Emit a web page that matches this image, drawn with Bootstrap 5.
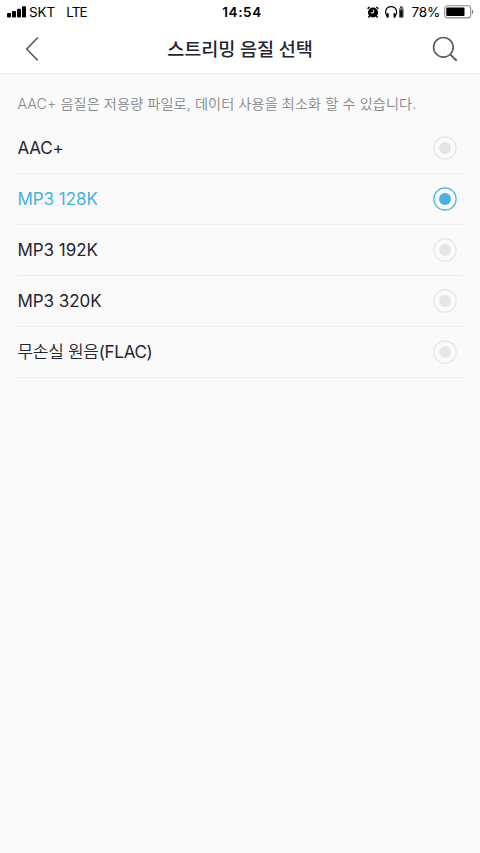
<!DOCTYPE html>
<html lang="ko">
<head>
<meta charset="utf-8">
<meta name="viewport" content="width=device-width, initial-scale=1">
<title>스트리밍 음질 선택</title>
<link rel="stylesheet" href="https://cdn.jsdelivr.net/npm/bootstrap@5.3.0/dist/css/bootstrap.min.css">
<style>
body{background:#fafafa;color:#25252f;font-family:Inter,"Noto Sans CJK KR",sans-serif;min-height:100vh}
svg{display:block;flex:none}
.top-area{background:#fff;height:74px;border-bottom:1px solid #ebebeb}
.status-bar{height:24px;color:#000;font-size:13.5px;line-height:24px;padding:0 6px 0 7px}
.status-side{flex:1 1 0}
.clock{font-size:13.5px;font-weight:600;letter-spacing:.6px;padding-left:3px}
.carrier{margin-left:3px;letter-spacing:-.1px}
.network{margin-left:11px;letter-spacing:-.8px}
.percent{margin:0 4px 0 7px;letter-spacing:-.2px}
.title-bar{height:49px;padding:0 22px 0 24px}
.page-title{font-size:18.6px;font-weight:500;letter-spacing:-.15px;line-height:49px;padding:1px 2px 0 0}
.icon-btn{line-height:0}
.hint{height:49px;padding:15px 0 0 17.5px;font-size:14.2px;line-height:30px;color:#85898b;letter-spacing:.08px;font-weight:350;white-space:nowrap}
.quality-list{margin:0 17px 0 17px}
.quality-list .quality-item{height:51px;padding:0 6px 0 .5px;border:0;border-bottom:1px solid #efefef;border-radius:0;background:transparent;color:#25252f;font-size:17px;letter-spacing:-.05px;line-height:50px}
.quality-list .selected{color:#4bb0df}
.quality-list .quality-item:first-child{letter-spacing:-.2px}
.quality-list .quality-item:last-child{letter-spacing:-.3px}
.lossless{font-weight:350}
.lossless .codec{font-weight:400}
.dot{width:24px;height:24px;color:#e5e5e5}
.selected .dot{color:#4bb0df}
</style>
</head>
<body>
<header class="top-area">
  <div class="status-bar d-flex align-items-center">
    <div class="status-side d-flex align-items-center">
      <svg width="19" height="12" viewBox="0 0 19 12"><rect x="0" y="7" width="4" height="4.5" rx="1"/><rect x="5" y="5" width="4" height="6.5" rx="1"/><rect x="10" y="2.8" width="4" height="8.7" rx="1"/><rect x="15" y="0.3" width="4" height="11.2" rx="1"/></svg>
      <span class="carrier">SKT</span><span class="network">LTE</span>
    </div>
    <span class="clock">14:54</span>
    <div class="status-side d-flex align-items-center justify-content-end">
      <svg width="12" height="13" viewBox="0 0 12 13"><circle cx="6" cy="6.5" r="5"/><path d="M.6 2.8 2.6 1M11.4 2.8 9.4 1M2.5 10l-1 1.5M9.5 10l1 1.5" stroke="#000" stroke-width="1.5"/><path d="M6.3 3.6v3.3H3.5" fill="none" stroke="#fff" stroke-width="1"/></svg>
      <svg class="ms-1" width="22" height="14" viewBox="0 0 22 14"><path d="M4 11.5C2.4 9.2 2.2 7.1 2.8 5.2 3.7 2.9 5.5 1.7 8.1 1.7s4.4 1.2 5.3 3.5c.6 1.9.4 4-1.2 6.3" fill="none" stroke="#000" stroke-width="1.2"/><rect x="3.7" y="8" width="2" height="4.7" rx=".8"/><rect x="10.5" y="8" width="2" height="4.7" rx=".8"/><rect x="16" y="3.2" width="4.6" height="9.5" rx=".9" fill="#555"/><path d="M17 1.6h2.6v1.1H17zM17.3 5.6h2v6.2h-2z"/></svg>
      <span class="percent">78%</span>
      <svg width="30" height="14" viewBox="0 0 30 14"><rect x=".7" y=".7" width="26" height="12.2" rx="3" fill="#fff" stroke="#8b8b8b" stroke-width="1.1"/><rect x="2.3" y="2.5" width="18.2" height="8.6" rx="1"/><path d="M28 4.5c1.7.8 1.7 3.8 0 4.6z" fill="#777"/></svg>
    </div>
  </div>
  <div class="title-bar d-flex align-items-center justify-content-between">
    <button class="icon-btn btn p-0 border-0" type="button" aria-label="뒤로"><svg width="26" height="28" viewBox="0 0 26 28"><path d="M13.8 2.5 2.8 14l11 11.5" fill="none" stroke="#56606b" stroke-width="1.7"/></svg></button>
    <h1 class="page-title m-0">스트리밍 음질 선택</h1>
    <button class="icon-btn btn p-0 border-0" type="button" aria-label="검색"><svg width="26" height="28" viewBox="0 0 26 28"><circle cx="11.4" cy="12.3" r="9.8" fill="none" stroke="#56606b" stroke-width="1.7"/><path d="m18.2 19.4 6.5 6.3" stroke="#56606b" stroke-width="2"/></svg></button>
  </div>
</header>
<main>
  <p class="hint m-0">AAC+ 음질은 저용량 파일로, 데이터 사용을 최소화 할 수 있습니다.</p>
  <ul class="quality-list list-group rounded-0">
    <li class="quality-item list-group-item d-flex align-items-center justify-content-between"><span>AAC+</span><svg class="dot" viewBox="0 0 24 24"><circle cx="12" cy="12" r="11.1" fill="none" stroke="currentColor" stroke-width="1.2"/><circle cx="12" cy="12" r="6" fill="currentColor"/></svg></li>
    <li class="quality-item selected list-group-item d-flex align-items-center justify-content-between"><span>MP3 128K</span><svg class="dot" viewBox="0 0 24 24"><circle cx="12" cy="12" r="11.1" fill="none" stroke="currentColor" stroke-width="1.2"/><circle cx="12" cy="12" r="6" fill="currentColor"/></svg></li>
    <li class="quality-item list-group-item d-flex align-items-center justify-content-between"><span>MP3 192K</span><svg class="dot" viewBox="0 0 24 24"><circle cx="12" cy="12" r="11.1" fill="none" stroke="currentColor" stroke-width="1.2"/><circle cx="12" cy="12" r="6" fill="currentColor"/></svg></li>
    <li class="quality-item list-group-item d-flex align-items-center justify-content-between"><span>MP3 320K</span><svg class="dot" viewBox="0 0 24 24"><circle cx="12" cy="12" r="11.1" fill="none" stroke="currentColor" stroke-width="1.2"/><circle cx="12" cy="12" r="6" fill="currentColor"/></svg></li>
    <li class="quality-item list-group-item d-flex align-items-center justify-content-between"><span class="lossless">무손실 원음<span class="codec">(FLAC)</span></span><svg class="dot" viewBox="0 0 24 24"><circle cx="12" cy="12" r="11.1" fill="none" stroke="currentColor" stroke-width="1.2"/><circle cx="12" cy="12" r="6" fill="currentColor"/></svg></li>
  </ul>
</main>
<script src="https://cdn.jsdelivr.net/npm/bootstrap@5.3.0/dist/js/bootstrap.bundle.min.js"></script>
</body>
</html>
